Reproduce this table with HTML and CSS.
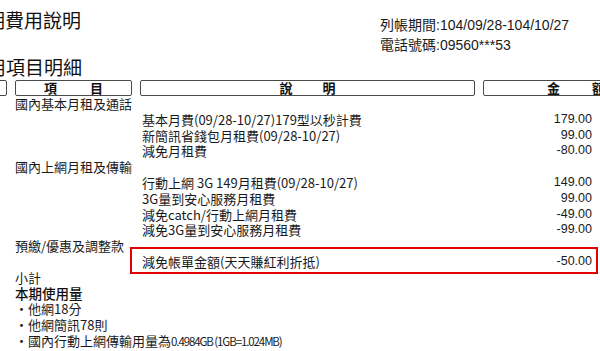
FILE: index.html
```html
<!DOCTYPE html>
<html lang="zh-Hant">
<head>
<meta charset="utf-8">
<title>費用項目明細</title>
<link rel="stylesheet" href="styles.css">
</head>
<body>
<div class="page">
  <header class="top">
    <h1 class="title title--first">期費用說明</h1>
    <div class="info">
      <div class="info-line">列帳期間:104/09/28-104/10/27</div>
      <div class="info-line">電話號碼:09560***53</div>
    </div>
  </header>
  <h2 class="title title--second">用項目明細</h2>

  <div class="heads">
    <div class="head head--cut"><span>費</span><span>用</span></div>
    <div class="head head--item"><span>項</span><span>目</span></div>
    <div class="head head--desc"><span>說</span><span>明</span></div>
    <div class="head head--amt"><span>金</span><span>額</span></div>
  </div>

  <div class="rows">
    <div class="row"><span class="cat">國內基本月租及通話</span></div>
    <div class="row"><span></span><span class="desc">基本月費(09/28-10/27)179型以秒計費</span><span class="amt">179.00</span></div>
    <div class="row"><span></span><span class="desc">新簡訊省錢包月租費(09/28-10/27)</span><span class="amt">99.00</span></div>
    <div class="row"><span></span><span class="desc">減免月租費</span><span class="amt">-80.00</span></div>
    <div class="row"><span class="cat">國內上網月租及傳輸</span></div>
    <div class="row"><span></span><span class="desc">行動上網 3G 149月租費(09/28-10/27)</span><span class="amt">149.00</span></div>
    <div class="row"><span></span><span class="desc">3G量到安心服務月租費</span><span class="amt">99.00</span></div>
    <div class="row"><span></span><span class="desc">減免catch/行動上網月租費</span><span class="amt">-49.00</span></div>
    <div class="row"><span></span><span class="desc">減免3G量到安心服務月租費</span><span class="amt">-99.00</span></div>
    <div class="row"><span class="cat">預繳/優惠及調整款</span></div>
    <div class="row row--marked"><span></span><span class="desc">減免帳單金額(天天賺紅利折抵)</span><span class="amt">-50.00</span></div>
    <div class="row"><span class="cat">小計</span></div>
  </div>

  <div class="usage">
    <div class="usage-title">本期使用量</div>
    <div class="usage-item">・他網18分</div>
    <div class="usage-item">・他網簡訊78則</div>
    <div class="usage-item">・國內行動上網傳輸用量為<span class="mono">0.4984GB (1GB=1.024MB)</span></div>
  </div>
  <div class="divider"></div>
</div>
</body>
</html>
```

FILE: styles.css
```css
html, body {
  margin: 0;
  padding: 0;
  background: #ffffff;
}

body {
  width: 600px;
  height: 351px;
  overflow: hidden;
  color: #1a1a1a;
  font-family: "Noto Sans CJK TC", "Noto Sans", sans-serif;
}

.page {
  padding-top: 8px;
}

.top {
  display: grid;
  grid-template-columns: 380px auto;
  height: 47px;
}

.title {
  margin: 0;
  font-size: 19px;
  line-height: 24px;
  font-weight: 400;
  color: #111;
  white-space: nowrap;
}

.title--first {
  margin-left: -14px;
}

.title--second {
  margin-left: -13px;
}

.info {
  margin-top: 7px;
  font-family: "Liberation Sans", "Noto Sans CJK TC", sans-serif;
  font-size: 14px;
  line-height: 20px;
  color: #1a1a1a;
  white-space: nowrap;
}

.heads {
  display: flex;
  gap: 8px;
  margin-top: 1px;
  margin-left: -110px;
}

.head {
  box-sizing: border-box;
  height: 16px;
  border: 1px solid #4a4a4a;
  border-radius: 2px;
  display: flex;
  justify-content: center;
  align-items: center;
  font-size: 13px;
  line-height: 14px;
  font-weight: 700;
  color: #111;
  flex: none;
}

.head--cut { width: 117px; gap: 33px; }
.head--item { width: 117px; gap: 33px; }
.head--desc { width: 335px; gap: 30px; }
.head--amt { width: 186px; gap: 32px; }

.rows {
  margin-left: 15px;
  width: 577px;
}

.row {
  position: relative;
  display: grid;
  grid-template-columns: 127px 1fr auto;
  height: 15.8px;
  line-height: 15.8px;
  font-size: 13px;
  white-space: nowrap;
}

.cat {
  grid-column: 1 / 3;
}

.amt {
  font-family: "Liberation Sans", sans-serif;
  font-size: 12.5px;
  text-align: right;
}

.row--marked::after {
  content: "";
  position: absolute;
  left: 115px;
  right: -6px;
  top: -7px;
  bottom: -4px;
  border: 2px solid #e30000;
}

.usage {
  margin-left: 15px;
  font-size: 13px;
  line-height: 15.8px;
  white-space: nowrap;
}

.usage-title {
  font-size: 13.5px;
  font-weight: 500;
  color: #111;
}

.mono {
  font-size: 11.5px;
  letter-spacing: -1.1px;
}

.divider {
  width: 597px;
  margin-top: 1px;
  border-top: 1px dotted #8a8a8a;
}
```
